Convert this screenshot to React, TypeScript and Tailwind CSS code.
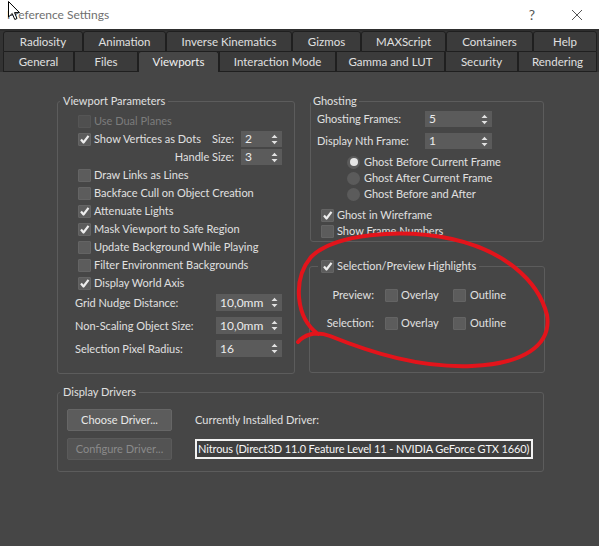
import React from 'react'

const font = { fontFamily: 'Lato, "Liberation Sans", Arial, sans-serif' }

function Check({ checked = false, disabled = false }: { checked?: boolean; disabled?: boolean }) {
  return (
    <span
      className={`w-[13px] h-[13px] shrink-0 flex items-center justify-center rounded-[1px] border ${
        disabled ? 'bg-[#4f4f4f] border-[#555]' : 'bg-[#5c5c5c] border-[#646464]'
      }`}
    >
      {checked && (
        <svg width="11" height="11" viewBox="0 0 11 11">
          <path d="M2 5.5 L4.5 8.5 L9.5 1.8" fill="none" stroke="#ededed" strokeWidth="2.2" strokeLinejoin="round" />
        </svg>
      )}
    </span>
  )
}

function CheckRow({ label, checked, disabled }: { label: string; checked?: boolean; disabled?: boolean }) {
  return (
    <div className="flex items-center gap-[3px] h-[18px] whitespace-nowrap">
      <Check checked={checked} disabled={disabled} />
      <span className={disabled ? 'text-[#7c7c7c]' : ''}>{label}</span>
    </div>
  )
}

function Arrows() {
  return (
    <svg width="7" height="11" viewBox="0 0 7 11" className="shrink-0">
      <path d="M0.5 4 L3.5 0.8 L6.5 4 Z" fill="#e2e2e2" />
      <path d="M0.5 7 L3.5 10.2 L6.5 7 Z" fill="#e2e2e2" />
    </svg>
  )
}

function Spinner({ value, className }: { value: string; className: string }) {
  return (
    <div className={`h-[16px] bg-[#5b5b5b] flex items-center justify-between pl-[4px] pr-[4px] text-[12px] text-[#ececec] ${className}`}>
      <span>{value}</span>
      <Arrows />
    </div>
  )
}

function Radio({ on = false, label }: { on?: boolean; label: string }) {
  return (
    <div className="flex items-center gap-[4px] h-[16px] whitespace-nowrap">
      <span className="w-[13px] h-[13px] rounded-full bg-[#5b5b5b] flex items-center justify-center">
        {on && <span className="w-[8px] h-[8px] rounded-full bg-[#e6e6e6]" />}
      </span>
      <span>{label}</span>
    </div>
  )
}

const row1 = [
  ['Radiosity', 'w-[80px]'],
  ['Animation', 'w-[83px]'],
  ['Inverse Kinematics', 'w-[126px]'],
  ['Gizmos', 'w-[69px]'],
  ['MAXScript', 'w-[85px]'],
  ['Containers', 'w-[87px]'],
  ['Help', 'w-[64px]'],
]

const row2 = [
  ['General', 'w-[71px]'],
  ['Files', 'w-[64px]'],
  ['Viewports', 'w-[81px]'],
  ['Interaction Mode', 'w-[117px]'],
  ['Gamma and LUT', 'w-[109px]'],
  ['Security', 'w-[73px]'],
  ['Rendering', 'w-[79px]'],
]

export default function App() {
  return (
    <div className="relative w-[599px] h-[546px] overflow-hidden bg-[#464646] text-[11px] leading-[14px] text-[#e0e0e0] flex flex-col" style={font}>
      {/* title bar */}
      <div className="h-[29px] bg-white flex items-center text-[12px] text-[#6f6f6f] shrink-0">
        <span className="pl-[7px]">Preference Settings</span>
        <span className="ml-auto w-[46px] text-center text-[14px] text-[#555]">?</span>
        <span className="w-[44px] flex justify-center">
          <svg width="12" height="12" viewBox="0 0 12 12">
            <path d="M1 1 L11 11 M11 1 L1 11" stroke="#555" strokeWidth="1" />
          </svg>
        </span>
      </div>

      {/* tabs */}
      <div className="h-[2px] bg-[#2e2e2e] shrink-0" />
      <div className="bg-[#333] pl-[3px] shrink-0 whitespace-nowrap text-[11.5px]">
        <div className="flex h-[21px]">
          {row1.map(([t, w]) => (
            <div key={t} className={`${w} h-full flex items-center justify-center bg-[#3b3b3b] border border-[#1f1f1f] rounded-t-[3px]`}>
              {t}
            </div>
          ))}
        </div>
        <div className="flex h-[20px] items-end">
          {row2.map(([t, w]) =>
            t === 'Viewports' ? (
              <div key={t} className={`${w} h-[21px] flex items-center justify-center bg-[#464646] border border-b-0 border-[#1f1f1f] rounded-t-[3px] text-[#f0f0f0]`}>
                {t}
              </div>
            ) : (
              <div key={t} className={`${w} h-full flex items-center justify-center bg-[#3b3b3b] border border-t-0 border-[#1f1f1f]`}>
                {t}
              </div>
            )
          )}
        </div>
      </div>

      {/* content */}
      <div className="pl-[57px] pt-[22px]">
        <div className="flex gap-[14px]">
          {/* Viewport Parameters */}
          <fieldset className="w-[238px] h-[280px] border border-[#5c5c5c] rounded-[3px]">
            <legend className="ml-[2px] px-[3px]">Viewport Parameters</legend>
            <div className="pt-[4px] pl-[20px] pr-[12px]">
              <CheckRow label="Use Dual Planes" disabled />
              <div className="flex items-center h-[18px] whitespace-nowrap">
                <div className="flex items-center gap-[3px]">
                  <Check checked />
                  <span>Show Vertices as Dots</span>
                </div>
                <span className="ml-auto mr-[7px]">Size:</span>
                <Spinner value="2" className="w-[41px]" />
              </div>
              <div className="flex items-center justify-end h-[18px]">
                <span className="mr-[7px]">Handle Size:</span>
                <Spinner value="3" className="w-[41px]" />
              </div>
              <CheckRow label="Draw Links as Lines" />
              <CheckRow label="Backface Cull on Object Creation" />
              <CheckRow label="Attenuate Lights" checked />
              <CheckRow label="Mask Viewport to Safe Region" checked />
              <CheckRow label="Update Background While Playing" />
              <CheckRow label="Filter Environment Backgrounds" />
              <CheckRow label="Display World Axis" checked />
            </div>
            <div className="pl-[17px] pr-[12px] mt-[2px] flex flex-col gap-[6px]">
              {[
                ['Grid Nudge Distance:', '10,0mm'],
                ['Non-Scaling Object Size:', '10,0mm'],
                ['Selection Pixel Radius:', '16'],
              ].map(([l, v]) => (
                <div key={l} className="flex items-center justify-between h-[17px]">
                  <span>{l}</span>
                  <Spinner value={v} className="w-[66px] h-[17px]" />
                </div>
              ))}
            </div>
          </fieldset>

          {/* right column */}
          <div className="w-[236px] flex flex-col">
            <fieldset className="h-[148px] border border-[#5c5c5c] rounded-[3px] ml-[1px] mr-[1px]">
              <legend className="ml-[0px] px-[2px]">Ghosting</legend>
              <div className="pl-[6px] pt-[3px]">
                <div className="flex items-center h-[16px]">
                  <span className="w-[108px]">Ghosting Frames:</span>
                  <Spinner value="5" className="w-[67px]" />
                </div>
                <div className="flex items-center h-[16px] mt-[6px]">
                  <span className="w-[108px]">Display Nth Frame:</span>
                  <Spinner value="1" className="w-[67px]" />
                </div>
              </div>
              <div className="pl-[36px] mt-[5px]">
                <Radio on label="Ghost Before Current Frame" />
                <Radio label="Ghost After Current Frame" />
                <Radio label="Ghost Before and After" />
              </div>
              <div className="pl-[10px] mt-[5px]">
                <div className="flex items-center gap-[3px] h-[16px]">
                  <Check checked />
                  <span>Ghost in Wireframe</span>
                </div>
                <div className="flex items-center gap-[3px] h-[16px]">
                  <Check />
                  <span>Show Frame Numbers</span>
                </div>
              </div>
            </fieldset>

            <fieldset className="mt-[17px] h-[114px] border border-[#5c5c5c] rounded-[3px]">
              <legend className="ml-[8px] px-[3px]">
                <span className="flex items-center gap-[3px]">
                  <Check checked />
                  <span>Selection/Preview Highlights</span>
                </span>
              </legend>
              <div className="pt-[14px] flex flex-col gap-[12px]">
                {['Preview:', 'Selection:'].map((l) => (
                  <div key={l} className="flex items-center h-[16px]">
                    <span className="w-[64px] text-right">{l}</span>
                    <div className="ml-[11px] w-[68px] flex items-center gap-[3px]">
                      <Check />
                      <span>Overlay</span>
                    </div>
                    <div className="flex items-center gap-[4px]">
                      <Check />
                      <span>Outline</span>
                    </div>
                  </div>
                ))}
              </div>
            </fieldset>
          </div>
        </div>

        {/* Display Drivers */}
        <fieldset className="mt-[11px] w-[487px] h-[87px] border border-[#5c5c5c] rounded-[3px]">
          <legend className="ml-[2px] px-[3px]">Display Drivers</legend>
          <div className="pl-[9px] pt-[10px]">
            <div className="flex items-center gap-[23px]">
              <div className="w-[105px] h-[22px] rounded-[2px] bg-[#5c5c5c] border border-[#666] flex items-center justify-center text-[#e8e8e8]">
                Choose Driver...
              </div>
              <span>Currently Installed Driver:</span>
            </div>
            <div className="flex items-center gap-[23px] mt-[7px]">
              <div className="w-[105px] h-[22px] rounded-[2px] bg-[#535353] border border-[#5a5a5a] flex items-center justify-center text-[#8a8a8a]">
                Configure Driver...
              </div>
              <div className="w-[338px] h-[20px] border-2 border-[#f2f2f2] bg-[#3e3e3e] flex items-center px-[1px] text-[#f5f5f5] tracking-[-0.12px] whitespace-nowrap overflow-hidden">
                Nitrous (Direct3D 11.0 Feature Level 11 - NVIDIA GeForce GTX 1660)
              </div>
            </div>
          </div>
        </fieldset>
      </div>

      {/* red hand-drawn annotation */}
      <svg className="absolute left-0 top-0 pointer-events-none" width="599" height="546" viewBox="0 0 599 546">
        <path
          d="M318 334 C296 318, 292 280, 311 257 C334 234, 400 228, 452 239 C502 250, 538 279, 547 315 C552 346, 522 364, 472 366 C420 368, 372 353, 330 336 C314 330, 303 336, 298 342"
          fill="none"
          stroke="#e3141b"
          strokeWidth="4"
          strokeLinecap="round"
        />
      </svg>

      {/* mouse cursor */}
      <svg className="absolute left-[8px] top-[1px] pointer-events-none" width="13" height="20" viewBox="0 0 13 20">
        <path d="M0.5 0.5 L0.5 16 L4.2 12.5 L6.8 18.5 L9 17.5 L6.5 11.6 L11.5 11.6 Z" fill="#fff" stroke="#000" strokeWidth="1" />
      </svg>
    </div>
  )
}
